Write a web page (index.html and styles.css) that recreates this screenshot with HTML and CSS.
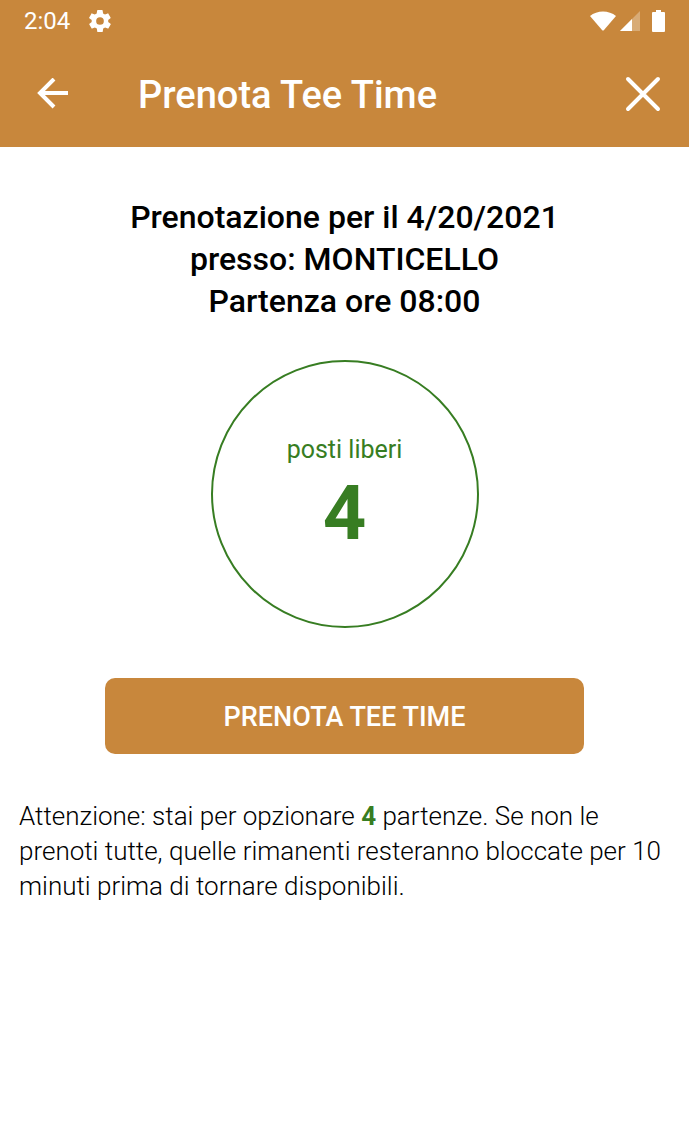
FILE: index.html
```html
<!DOCTYPE html>
<html lang="it">

<head>
    <meta charset="UTF-8">
    <meta name="viewport" content="width=device-width, initial-scale=1.0">
    <title>Prenota Tee Time</title>
    <link rel="stylesheet" href="styles.css">
</head>

<body>

    <header>
        <div class="status-bar">
            <span class="clock">2:04</span>
            <svg class="gear" viewBox="2 2 20 20" width="22" height="22" fill="#fff">
                <path d="M19.4 13c.1-.3.1-.6.1-1s0-.7-.1-1l2.1-1.6c.2-.2.2-.4.1-.6l-2-3.5c-.1-.2-.4-.3-.6-.2l-2.5 1c-.5-.4-1.1-.7-1.7-1l-.4-2.600c0-.3-.2-.5-.5-.5h-4c-.2 0-.4.2-.5.5l-.4 2.600c-.6.3-1.200.6-1.700 1l-2.500-1c-.2-.1-.5 0-.6.2l-2 3.500c-.1.2-.1.4.1.6L4.500 11c0 .3-.1.600-.1 1s0 .7.1 1l-2.100 1.600c-.2.2-.2.4-.1.600l2 3.500c.1.2.4.3.6.2l2.500-1c.5.4 1.100.7 1.700 1l.4 2.600c0 .3.2.5.5.5h4c.2 0 .4-.2.500-.5l.4-2.600c.6-.3 1.200-.6 1.700-1l2.500 1c.2.1.5 0 .6-.2l2-3.500c.1-.2.1-.4-.1-.6zM12 15.500a3.500 3.500 0 1 1 0-7 3.500 3.500 0 0 1 0 7z"/>
            </svg>
            <div class="signals">
                <svg viewBox="0 0 26 20" width="26" height="20" fill="#fff">
                    <path d="M0 5C7-1 19-1 26 5L14 19q-1 1-2 0z"/>
                </svg>
                <svg viewBox="0 0 20 20" width="20" height="20" fill="#fff">
                    <path d="M20 0v20H0z" opacity=".3"/>
                    <path d="M12 8v12H0z"/>
                </svg>
                <svg class="battery" viewBox="0 0 13 22" width="13" height="22" fill="#fff">
                    <path d="M4 0h5v2h3q1 0 1 1v18q0 1-1 1H1q-1 0-1-1V3q0-1 1-1h3z"/>
                </svg>
            </div>
        </div>

        <div class="title-bar">
            <button type="button" class="icon-button" aria-label="Indietro">
                <svg viewBox="0 0 32 32" width="32" height="32" fill="none" stroke="#fff" stroke-width="4">
                    <path d="M32 15H4M18 1L4 15l14 14"/>
                </svg>
            </button>
            <h1>Prenota Tee Time</h1>
            <button type="button" class="icon-button" aria-label="Chiudi">
                <svg viewBox="0 0 36 36" width="36" height="36" fill="none" stroke="#fff" stroke-width="4" stroke-linecap="round">
                    <path d="M3 3l30 30M33 3L3 33"/>
                </svg>
            </button>
        </div>
    </header>

    <main>
        <h2>
            Prenotazione per il 4/20/2021<br>
            presso: MONTICELLO<br>
            Partenza ore 08:00
        </h2>

        <div class="places">
            <span class="places-label">posti liberi</span>
            <strong class="places-count">4</strong>
        </div>

        <button type="button" class="book">PRENOTA TEE TIME</button>

        <p class="warning">Attenzione: stai per opzionare <strong>4</strong> partenze. Se non le prenoti tutte, quelle rimanenti resteranno bloccate per 10 minuti prima di tornare disponibili.</p>
    </main>

</body>

</html>
```
FILE: styles.css
```css
* {
    box-sizing: border-box;
}

body {
    margin: 0;
    background-color: #fff;
    color: #000;
    font-family: Roboto, "Liberation Sans", sans-serif;
}

header {
    background-color: #c8873c;
    color: #fff;
}

.status-bar {
    display: flex;
    align-items: center;
    height: 41px;
    padding: 0 24px;
}

.clock {
    font-size: 24px;
}

.gear {
    margin-left: 19px;
}

.signals {
    display: flex;
    align-items: center;
    gap: 4px;
    margin-left: auto;
}

.battery {
    margin-left: 8px;
}

.title-bar {
    display: flex;
    align-items: center;
    height: 106px;
    padding: 0 28px 0 36px;
}

.icon-button {
    display: flex;
    padding: 0;
    border: none;
    background: none;
    cursor: pointer;
}

h1 {
    flex: 1;
    margin: 0 0 0 70px;
    padding-top: 2px;
    font-size: 38px;
    font-weight: 500;
}

main {
    display: flex;
    flex-direction: column;
    align-items: center;
    padding: 49px 19px;
}

h2 {
    margin: 0;
    font-size: 32px;
    font-weight: 500;
    line-height: 42px;
    text-align: center;
}

.places {
    display: flex;
    flex-direction: column;
    align-items: center;
    width: 268px;
    height: 268px;
    margin-top: 38px;
    padding-top: 72px;
    border: 2px solid #377d22;
    border-radius: 50%;
    color: #377d22;
}

.places-label {
    font-size: 25px;
    line-height: 32px;
}

.places-count {
    font-size: 76px;
    line-height: 94px;
}

.book {
    width: calc(100% - 172px);
    height: 76px;
    margin-top: 50px;
    padding: 2px 0 0;
    border: none;
    border-radius: 10px;
    background-color: #c8873c;
    color: #fff;
    font-family: inherit;
    font-size: 27px;
    font-weight: 500;
    cursor: pointer;
}

.warning {
    width: 100%;
    margin: 45px 0 0;
    font-size: 26px;
    font-weight: 300;
    line-height: 35px;
}

.warning strong {
    color: #377d22;
    font-weight: 700;
}
```
